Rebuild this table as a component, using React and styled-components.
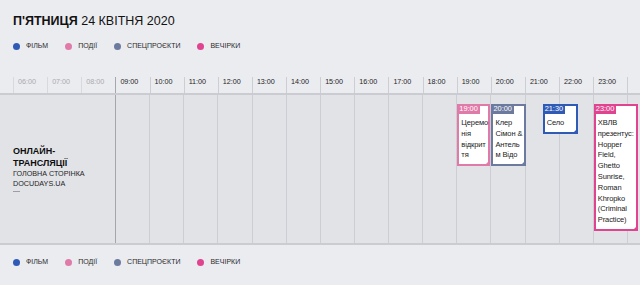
import React from "react";
import styled, { createGlobalStyle } from "styled-components";

const COL = 34.13;
const FIRST_HOUR = 9;

const categories = [
  { key: "film", label: "Фільм", color: "#2f5bb7" },
  { key: "event", label: "Події", color: "#e07aa8" },
  { key: "special", label: "Спецпроєкти", color: "#6b7a9e" },
  { key: "party", label: "Вечірки", color: "#e0438f" },
];

const colorOf = (key) => categories.find((c) => c.key === key).color;

const hours = [6, 7, 8, 9, 10, 11, 12, 13, 14, 15, 16, 17, 18, 19, 20, 21, 22, 23, null];

const events = [
  { time: "19:00", start: 19, width: 33, type: "event", lines: ["Церемо", "нія", "відкрит", "тя"] },
  { time: "20:00", start: 20, width: 35, type: "special", lines: ["Клер", "Сімон &", "Антель", "м Відо"] },
  { time: "21:30", start: 21.5, width: 35, type: "film", lines: ["Село"] },
  {
    time: "23:00",
    start: 23,
    width: 44,
    type: "party",
    lines: ["ХВЛВ", "презентус:", "Hopper", "Field,", "Ghetto", "Sunrise,", "Roman", "Khropko", "(Criminal", "Practice)"],
  },
];

const pad = (h) => (h < 10 ? `0${h}:00` : `${h}:00`);

function Legend() {
  return (
    <LegendRow>
      {categories.map((c) => (
        <LegendItem key={c.key}>
          <Dot $color={c.color} />
          {c.label}
        </LegendItem>
      ))}
    </LegendRow>
  );
}

function App() {
  return (
    <>
      <GlobalStyle />
      <Page>
        <Title>
          <b>П'ятниця</b> 24 квітня 2020
        </Title>
        <Legend />
        <HourHeader>
          {hours.map((h, i) => (
            <HourCell key={i} $muted={h !== null && h < FIRST_HOUR} $first={h === FIRST_HOUR}>
              {h !== null ? pad(h) : ""}
            </HourCell>
          ))}
        </HourHeader>
        <Body>
          <Venue>
            <VenueName>Онлайн-<br />трансляції</VenueName>
            <VenueSub>Головна сторінка<br />docudays.ua</VenueSub>
            <VenueMark />
          </Venue>
          <Grid>
            {hours
              .filter((h) => h === null || h >= FIRST_HOUR)
              .map((h, i) => (
                <GridCol key={i} />
              ))}
            {events.map((e) => (
              <Card
                key={e.time}
                $color={colorOf(e.type)}
                style={{ left: (e.start - FIRST_HOUR) * COL, width: e.width }}
              >
                <Tag $color={colorOf(e.type)}>{e.time}</Tag>
                <CardText>
                  {e.lines.map((l, i) => (
                    <div key={i}>{l}</div>
                  ))}
                </CardText>
              </Card>
            ))}
          </Grid>
        </Body>
        <BottomLegend>
          <Legend />
        </BottomLegend>
      </Page>
    </>
  );
}

export default App;

const GlobalStyle = createGlobalStyle`
  html, body {
    margin: 0;
    background: #ebecf0;
    font-family: "Liberation Sans", Arial, sans-serif;
    color: #1d1d1f;
  }
`;

const Page = styled.div`
  width: 640px;
  height: 285px;
  overflow: hidden;
  padding-top: 12px;
  box-sizing: border-box;
`;

const Title = styled.h1`
  margin: 0 0 0 13px;
  font-size: 12.5px;
  line-height: 18px;
  font-weight: 400;
  text-transform: uppercase;
  color: #111;

  b {
    font-weight: 700;
  }
`;

const LegendRow = styled.div`
  display: flex;
  gap: 17px;
  margin: 11px 0 0 13px;
  height: 10px;
  align-items: center;
`;

const LegendItem = styled.div`
  display: flex;
  align-items: center;
  gap: 6px;
  font-size: 7px;
  line-height: 10px;
  text-transform: uppercase;
  color: #2a2a2c;
`;

const Dot = styled.span`
  width: 7px;
  height: 7px;
  border-radius: 50%;
  background: ${(p) => p.$color};
`;

const HourHeader = styled.div`
  display: flex;
  margin-top: 26px;
  padding-left: 13px;
  height: 16px;
  border-bottom: 2px solid #cbccd1;
`;

const HourCell = styled.div`
  flex: 0 0 ${COL}px;
  box-sizing: border-box;
  padding-left: 4px;
  border-left: 1px solid ${(p) => (p.$first ? "#a6a7ac" : p.$muted ? "#d8d9dd" : "#cdced3")};
  font-size: 7.2px;
  line-height: 9px;
  color: ${(p) => (p.$muted ? "#a9aaae" : "#1d1d1f")};
`;

const Body = styled.div`
  display: flex;
  height: 148px;
  background: #e2e3e7;
  border-bottom: 2px solid #cbccd1;
`;

const Venue = styled.div`
  flex: 0 0 116px;
  box-sizing: border-box;
  border-right: 1px solid #a6a7ac;
  padding-left: 13px;
  display: flex;
  flex-direction: column;
  justify-content: center;
`;

const VenueName = styled.div`
  font-size: 9px;
  font-weight: 700;
  line-height: 11.5px;
  text-transform: uppercase;
  color: #0d0d0f;
`;

const VenueSub = styled.div`
  font-size: 7.2px;
  line-height: 10px;
  text-transform: uppercase;
  color: #1d1d1f;
`;

const VenueMark = styled.span`
  width: 7px;
  height: 1px;
  margin-top: 2px;
  background: #9d9ea3;
`;

const Grid = styled.div`
  position: relative;
  flex: 1;
  display: flex;
`;

const GridCol = styled.div`
  flex: 0 0 ${COL}px;
  box-sizing: border-box;
  border-right: 1px solid #cdced3;
`;

const Card = styled.div`
  position: absolute;
  top: 9px;
  box-sizing: border-box;
  background: #fff;
  border: 2px solid ${(p) => p.$color};

  &::after {
    content: "";
    position: absolute;
    right: -2px;
    bottom: -2px;
    border-bottom: 6px solid ${(p) => p.$color};
    border-left: 6px solid transparent;
  }
`;

const Tag = styled.div`
  width: fit-content;
  margin: -2px 0 0 -2px;
  padding: 0 2px;
  height: 10px;
  font-size: 7.4px;
  line-height: 10px;
  color: #fff;
  background: ${(p) => p.$color};
`;

const CardText = styled.div`
  padding: 4px 1px 3px 2px;
  font-size: 7.5px;
  line-height: 10.8px;
  letter-spacing: -0.1px;
  white-space: nowrap;
  color: #222;
`;

const BottomLegend = styled.div`
  padding-top: 1px;
`;
